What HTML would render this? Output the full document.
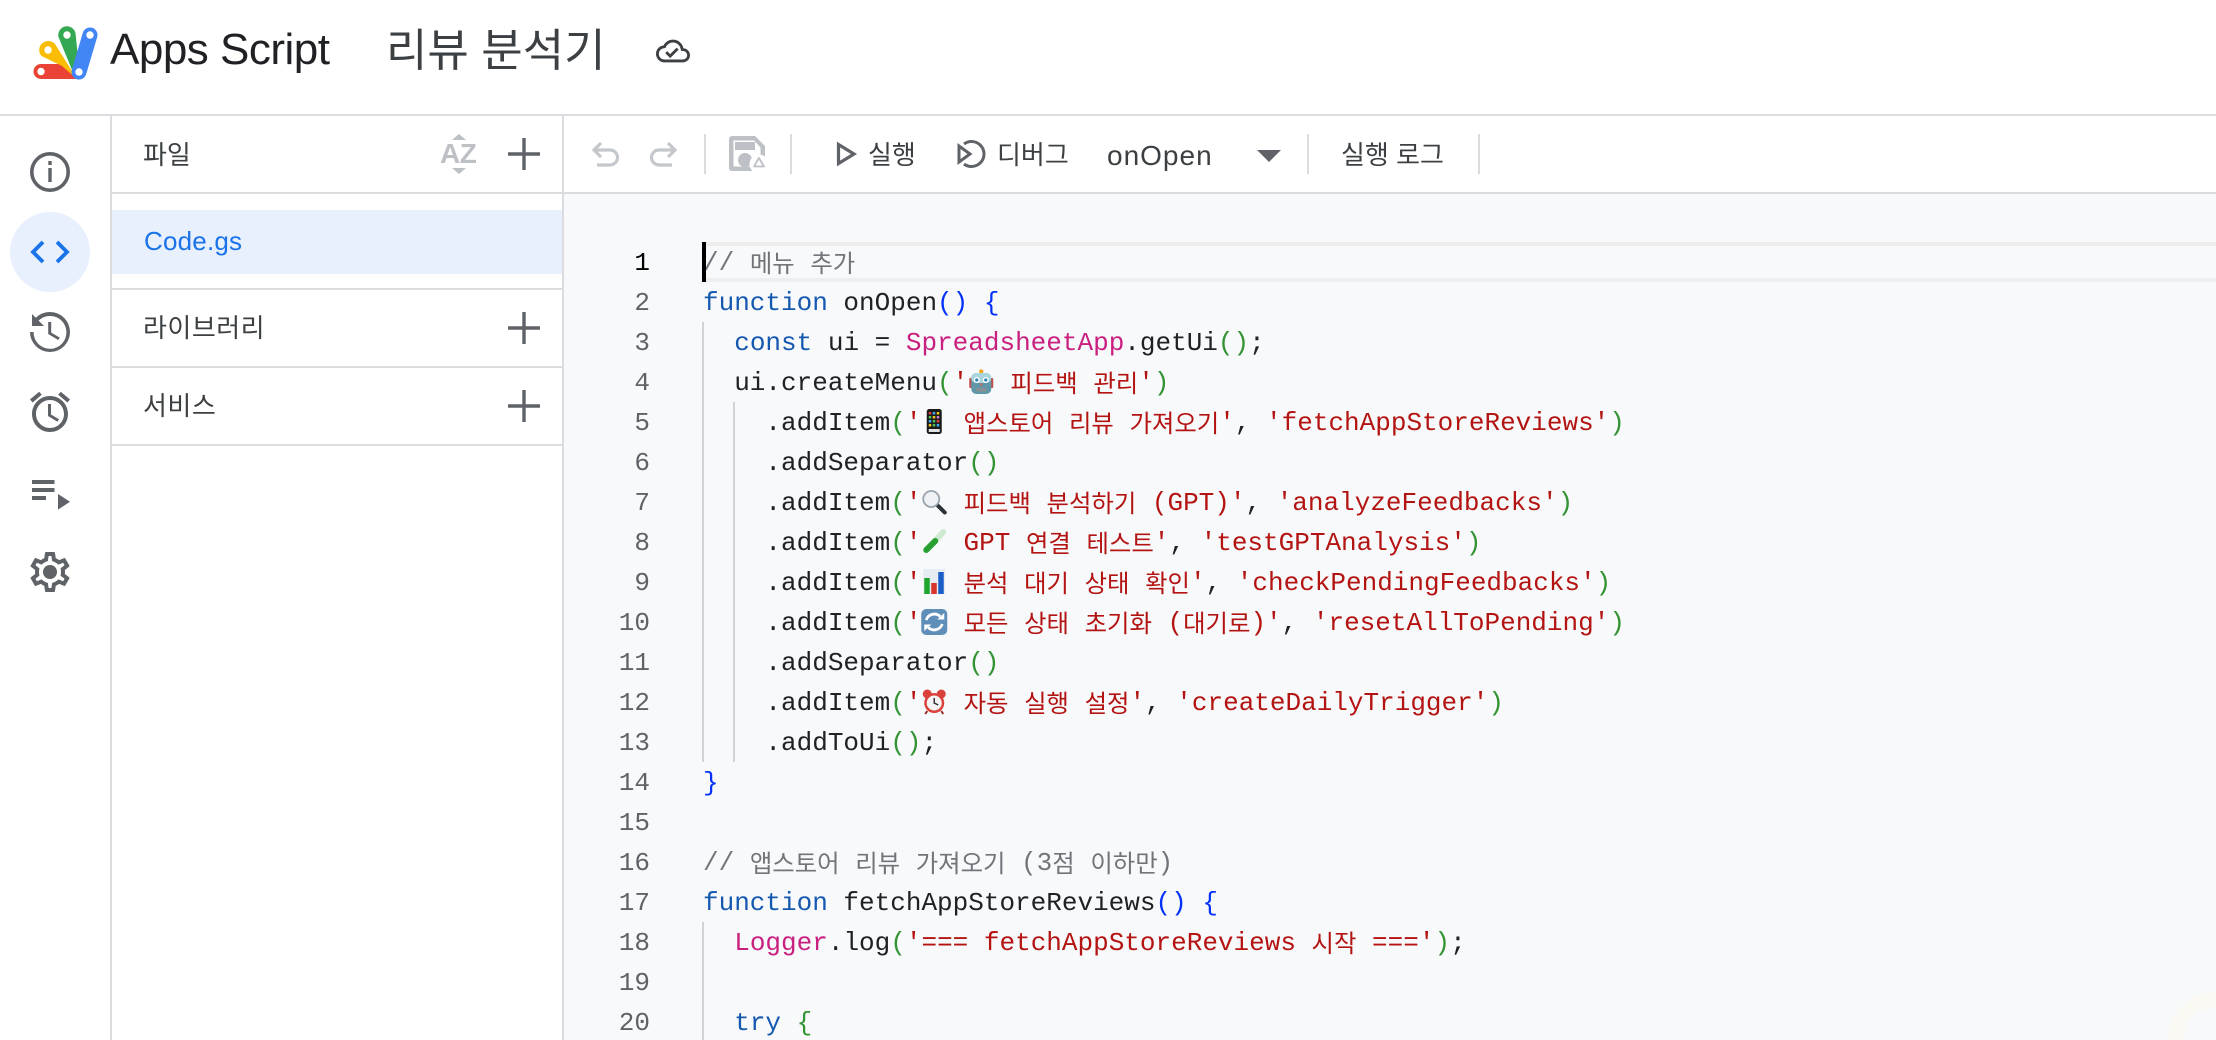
<!DOCTYPE html>
<html lang="ko"><head><meta charset="utf-8"><title>Apps Script</title>
<style>
html,body{margin:0;padding:0;width:2216px;height:1040px;overflow:hidden;background:#fff}
body{position:relative;font-family:"Liberation Sans","Noto Sans CJK KR",sans-serif;color:#3c4043}
.a{position:absolute}
.h{position:absolute;background:#dadce0;height:2px}
.v{position:absolute;background:#dadce0;width:2px}
.t{position:absolute;white-space:pre;font-size:26px;line-height:40px}
.l{position:absolute;left:703px;height:40px;line-height:40px;white-space:pre;font:26px/40px "Liberation Mono","Noto Sans CJK KR",monospace;color:#202124;margin-top:1px}
.l i{font-style:normal;font-size:24.4px;position:relative;top:2px}
.n{position:absolute;right:1566px;height:40px;font:26px/40px "Liberation Mono",monospace;color:#5f6368;margin-top:1px}
.k{color:#1558b0}.y{color:#c9207f}.s{color:#b31412}.c{color:#70757a}.b{color:#0431fa}.g{color:#319331}
.e{display:inline-block;width:26.5px;height:26px;vertical-align:-5px}
.e svg{display:block;width:26.5px;height:26px}
svg.i{position:absolute;width:48px;height:48px;left:26px;fill:#5f6368}
svg.p{position:absolute;width:40px;height:40px;left:504px;fill:none;stroke:#5f6368;stroke-width:3.4}
</style></head><body>

<!-- header -->
<svg class="a" style="left:24px;top:20px" width="90" height="66" viewBox="0 0 90 66" fill="none" stroke-linecap="round">
<path d="M17 44H40L53 59H17a7.500 7.500 0 0 1 0-15z" fill="#ea4335"/>
<path d="M17.500 36A9 9 0 0 1 31 24L53 59L38 46z" fill="#fbbc04"/>
<path d="M34.500 17A8.500 8.500 0 0 1 51.500 13L56 58L48 50z" fill="#34a853"/>
<path d="M66 15L55 52" stroke="#4285f4" stroke-width="15"/>
<g fill="#fff" stroke="none"><circle cx="17" cy="51.500" r="3.700"/><circle cx="24" cy="30" r="3.700"/><circle cx="43" cy="15" r="3.700"/><circle cx="66" cy="15" r="3.700"/><circle cx="55" cy="52" r="3.700"/></g>
</svg>
<div class="a" style="left:110px;top:24px;font-size:44px;line-height:52px;letter-spacing:-.5px;color:#202124;white-space:pre">Apps Script</div>
<div class="a" style="left:386px;top:18px;font-size:45px;line-height:66px;color:#3c4043;white-space:pre">리뷰 분석기</div>
<svg class="a" style="left:656px;top:34px;fill:#3c4043" width="34" height="34" viewBox="0 0 24 24"><path d="M19.35 10.04C18.67 6.59 15.64 4 12 4 9.11 4 6.6 5.64 5.35 8.04 2.34 8.36 0 10.91 0 14c0 3.31 2.69 6 6 6h13c2.76 0 5-2.24 5-5 0-2.64-2.05-4.78-4.65-4.96zM19 18H6c-2.21 0-4-1.79-4-4 0-2.05 1.53-3.76 3.56-3.97l1.07-.11.5-.95C8.08 7.14 9.94 6 12 6c2.62 0 4.88 1.86 5.39 4.43l.3 1.5 1.53.11c1.56.1 2.78 1.41 2.78 2.96 0 1.65-1.35 3-3 3zm-9-3.82l-2.09-2.09L6.5 13.5 10 17l6.01-6.01-1.41-1.41z"/></svg>

<!-- editor bg -->
<div class="a" style="left:564px;top:194px;width:1652px;height:846px;background:#f8f9fb"></div>

<!-- structure lines -->
<div class="h" style="left:0;top:114px;width:2216px;height:2px"></div>
<div class="v" style="left:110px;top:116px;height:924px"></div>
<div class="v" style="left:562px;top:116px;height:924px"></div>
<div class="h" style="left:112px;top:192px;width:2104px"></div>
<div class="h" style="left:112px;top:288px;width:450px"></div>
<div class="h" style="left:112px;top:366px;width:450px"></div>
<div class="h" style="left:112px;top:444px;width:450px"></div>

<!-- rail -->
<div class="a" style="left:10px;top:212px;width:80px;height:80px;border-radius:50%;background:#e8f0fe"></div>
<svg class="a" style="left:26px;top:148px" width="48" height="48" viewBox="26 148 48 48"><circle cx="50" cy="172" r="18.200" fill="none" stroke="#5f6368" stroke-width="3.600"/><rect x="48.300" y="161" width="3.400" height="4" fill="#5f6368"/><rect x="48.300" y="168" width="3.400" height="14" fill="#5f6368"/></svg>
<svg class="a" style="left:26px;top:228px" width="48" height="48" viewBox="26 228 48 48" fill="none" stroke="#1a73e8" stroke-width="3.800"><path d="M43 242L33 252L43 262M57 242L67 252L57 262"/></svg>
<svg class="i" style="top:308px" viewBox="0 0 24 24"><path d="M12 2A10 10 0 0 0 4.900 4.900L3 3v6h6L6.300 6.300A8.200 8.200 0 1 1 3.800 12H2a10 10 0 1 0 10-10z"/><path d="M11.100 7v6l5 3 .8-1.200-4.300-2.500V7z"/></svg>
<svg class="i" style="top:388px" viewBox="0 0 24 24"><path d="M22 5.720l-4.600-3.860-1.290 1.530 4.600 3.860L22 5.720zM7.880 3.390L6.600 1.860 2 5.710l1.290 1.530 4.590-3.850zM12.500 8H11v6l4.750 2.850.75-1.230-4-2.370V8zM12 4c-4.970 0-9 4.030-9 9s4.030 9 9 9 9-4.030 9-9-4.030-9-9-9zm0 16c-3.870 0-7-3.130-7-7s3.130-7 7-7 7 3.130 7 7-3.130 7-7 7z"/></svg>
<svg class="a" style="left:26px;top:470px;fill:#5f6368" width="48" height="48" viewBox="26 470 48 48"><path d="M32 480h22.500v4H32zM32 488h22.500v4H32zM32 496h14v4H32zM58 494l12 7.800-12 7.800z"/></svg>
<svg class="i" style="top:548px" viewBox="0 0 24 24"><path d="M19.430 12.980c.04-.32.07-.64.07-.98 0-.34-.03-.66-.07-.98l2.110-1.650c.19-.15.24-.42.12-.64l-2-3.460c-.09-.16-.26-.25-.44-.25-.06 0-.12.01-.17.03l-2.490 1c-.52-.4-1.080-.73-1.690-.98l-.38-2.650C14.460 2.180 14.250 2 14 2h-4c-.25 0-.46.18-.49.42l-.38 2.650c-.61.25-1.170.59-1.690.98l-2.490-1c-.06-.02-.12-.03-.18-.03-.17 0-.34.09-.43.25l-2 3.460c-.13.22-.07.49.12.64l2.110 1.650c-.04.32-.07.65-.07.98 0 .33.03.66.07.98l-2.110 1.650c-.19.15-.24.42-.12.64l2 3.460c.09.16.26.25.44.25.06 0 .12-.01.17-.03l2.490-1c.52.4 1.080.73 1.690.98l.38 2.650c.03.24.24.42.49.42h4c.25 0 .46-.18.49-.42l.38-2.650c.61-.25 1.170-.59 1.690-.98l2.490 1c.06.02.12.03.18.03.17 0 .34-.09.43-.25l2-3.460c.12-.22.07-.49-.12-.64l-2.110-1.650zm-1.980-1.710c.04.31.05.52.05.73 0 .21-.02.43-.05.73l-.14 1.130.89.7 1.080.84-.7 1.210-1.270-.51-1.040-.42-.9.68c-.43.32-.84.56-1.250.73l-1.060.43-.16 1.130-.2 1.350h-1.400l-.19-1.350-.16-1.130-1.060-.43c-.43-.18-.83-.41-1.230-.71l-.91-.7-1.060.43-1.270.51-.7-1.210 1.080-.84.89-.7-.14-1.130c-.03-.31-.05-.54-.05-.74s.02-.43.05-.73l.14-1.130-.89-.7-1.080-.84.7-1.210 1.270.51 1.040.42.9-.68c.43-.32.84-.56 1.250-.73l1.060-.43.16-1.130.2-1.350h1.390l.19 1.350.16 1.130 1.060.43c.43.18.83.41 1.230.71l.91.7 1.060-.43 1.270-.51.7 1.210-1.070.85-.89.7.14 1.130z"/><circle cx="12" cy="12" r="3.500"/></svg>

<!-- file panel -->
<div class="t" style="left:143px;top:135px">파일</div>
<div class="a" style="left:440px;top:136px;font:bold 28px/36px 'Liberation Sans',sans-serif;color:#bdc1c6;letter-spacing:-.5px">AZ</div>
<svg class="a" style="left:450px;top:134px;fill:#bdc1c6" width="20" height="40" viewBox="0 0 20 40"><path d="M2 6l7-6 7 6zM2 34h14l-7 6z"/></svg>
<svg class="p" style="top:134px" viewBox="0 0 40 40"><path d="M20 4v32M4 20h32"/></svg>
<div class="a" style="left:112px;top:210px;width:450px;height:64px;background:#e8f0fe"></div>
<div class="t" style="left:144px;top:221px;color:#1a73e8;letter-spacing:.2px">Code.gs</div>
<div class="t" style="left:143px;top:308px;letter-spacing:.5px">라이브러리</div>
<svg class="p" style="top:308px" viewBox="0 0 40 40"><path d="M20 4v32M4 20h32"/></svg>
<div class="t" style="left:143px;top:386px;letter-spacing:.5px">서비스</div>
<svg class="p" style="top:386px" viewBox="0 0 40 40"><path d="M20 4v32M4 20h32"/></svg>

<!-- toolbar -->
<svg class="a" style="left:564px;top:116px" width="940" height="76" viewBox="564 116 940 76" fill="none">
<g stroke="#c4c7cb" stroke-width="3.200">
<path d="M601 143L594 150L601 157M594 150H610a7.500 7.500 0 0 1 0 15H597"/>
<path d="M668 143L675 150L668 157M675 150H659a7.500 7.500 0 0 0 0 15H672"/>
</g>
<g fill="#dadce0"><rect x="704" y="134" width="2" height="40"/><rect x="790" y="134" width="2" height="40"/><rect x="1307" y="134" width="2" height="40"/><rect x="1478" y="134" width="2" height="40"/></g>
<path d="M729 139a3 3 0 0 1 3-3h23l10 10v22a3 3 0 0 1-3 3h-30a3 3 0 0 1-3-3z" fill="#bdc1c6"/>
<path d="M733.500 140.500h20.500l6.500 7v19h-27z" fill="#fff"/>
<rect x="735" y="142" width="20" height="8" fill="#bdc1c6"/>
<circle cx="745" cy="160" r="7" fill="#bdc1c6"/>
<circle cx="759" cy="164" r="9.500" fill="#fff"/>
<path d="M759 158l5 8.500h-10z" stroke="#bdc1c6" stroke-width="1.800" stroke-linejoin="round"/>
<path d="M838.500 144.500l15.500 9.500-15.500 9.500z" stroke="#5f6368" stroke-width="3.200"/>
<path d="M959 146l11 8-11 8z" stroke="#5f6368" stroke-width="3"/>
<path d="M964 144a12.500 12.500 0 1 1 0 20" stroke="#5f6368" stroke-width="3"/>
<path d="M1257 150h24l-12 12z" fill="#5f6368"/>
</svg>
<div class="t" style="left:868px;top:135px">실행</div>
<div class="t" style="left:997px;top:135px">디버그</div>
<div class="t" style="left:1107px;top:136px;font-size:28px;letter-spacing:1px">onOpen</div>
<div class="t" style="left:1341px;top:135px">실행 로그</div>

<!-- code -->
<div class="a" style="left:706px;top:242px;width:1510px;height:32px;border-top:4px solid #eeeeee;border-bottom:4px solid #eeeeee"></div>
<div class="a" style="left:702px;top:322px;width:2px;height:440px;background:#d3d3d3"></div>
<div class="a" style="left:733px;top:402px;width:2px;height:360px;background:#d3d3d3"></div>
<div class="a" style="left:702px;top:922px;width:2px;height:118px;background:#d3d3d3"></div>
<div class="a" style="left:2168px;top:992px;width:48px;height:48px;overflow:hidden"><div style="width:66px;height:66px;border:15px solid #faf9f4;border-radius:50%;box-sizing:content-box"></div></div>

<div class="n" style="top:242px;color:#000">1</div>
<div class="n" style="top:282px">2</div>
<div class="n" style="top:322px">3</div>
<div class="n" style="top:362px">4</div>
<div class="n" style="top:402px">5</div>
<div class="n" style="top:442px">6</div>
<div class="n" style="top:482px">7</div>
<div class="n" style="top:522px">8</div>
<div class="n" style="top:562px">9</div>
<div class="n" style="top:602px">10</div>
<div class="n" style="top:642px">11</div>
<div class="n" style="top:682px">12</div>
<div class="n" style="top:722px">13</div>
<div class="n" style="top:762px">14</div>
<div class="n" style="top:802px">15</div>
<div class="n" style="top:842px">16</div>
<div class="n" style="top:882px">17</div>
<div class="n" style="top:922px">18</div>
<div class="n" style="top:962px">19</div>
<div class="n" style="top:1002px">20</div>

<div class="l" style="top:242px"><span class="c">// <i>메뉴</i> <i>추가</i></span></div>
<div class="a" style="left:702px;top:242px;width:4px;height:40px;background:#000"></div>
<div class="l" style="top:282px"><span class="k">function</span> onOpen<span class="b">()</span> <span class="b">{</span></div>
<div class="l" style="top:322px">  <span class="k">const</span> ui = <span class="y">SpreadsheetApp</span>.getUi<span class="g">()</span>;</div>
<div class="l" style="top:362px">  ui.createMenu<span class="g">(</span><span class="s">'<span class="e"><svg viewBox="0 0 26 26"><circle cx="13" cy="2.500" r="2.200" fill="#f5a623"/><rect x="1" y="9" width="3" height="10" rx="1" fill="#c0504d"/><rect x="22" y="9" width="3" height="10" rx="1" fill="#c0504d"/><rect x="3" y="4" width="20" height="21" rx="5" fill="#5f97a8"/><rect x="3" y="4" width="20" height="10" rx="5" fill="#a9d5dd"/><circle cx="8.500" cy="11" r="3" fill="#fff"/><circle cx="17.500" cy="11" r="3" fill="#fff"/><circle cx="8.500" cy="11" r="1.600" fill="#2a7fb8"/><circle cx="17.500" cy="11" r="1.600" fill="#2a7fb8"/><path d="M11.500 14.500h3l-1.500 3z" fill="#e05a4e"/><rect x="8" y="19" width="10" height="3.500" rx="1" fill="#8a8f94"/></svg></span> <i>피드백</i> <i>관리</i>'</span><span class="g">)</span></div>
<div class="l" style="top:402px">    .addItem<span class="g">(</span><span class="s">'<span class="e"><svg viewBox="0 0 26 26"><rect x="5.500" y="0" width="15" height="25" rx="2.500" fill="#1a1a1a"/><g fill="#e8403a"><rect x="7.500" y="3" width="2.500" height="2.500"/><rect x="15.500" y="11" width="2.500" height="2.500"/></g><g fill="#3fa9f5"><rect x="11.500" y="3" width="2.500" height="2.500"/><rect x="7.500" y="11" width="2.500" height="2.500"/><rect x="15.500" y="15" width="2.500" height="2.500"/></g><g fill="#f5c518"><rect x="15.500" y="3" width="2.500" height="2.500"/><rect x="11.500" y="7" width="2.500" height="2.500"/><rect x="7.500" y="15" width="2.500" height="2.500"/></g><g fill="#4cc35b"><rect x="7.500" y="7" width="2.500" height="2.500"/><rect x="11.500" y="11" width="2.500" height="2.500"/><rect x="11.500" y="15" width="2.500" height="2.500"/></g><g fill="#c77dd6"><rect x="15.500" y="7" width="2.500" height="2.500"/></g><rect x="7.500" y="20" width="11" height="3" fill="#dfe3e6"/></svg></span> <i>앱스토어</i> <i>리뷰</i> <i>가져오기</i>'</span>, <span class="s">'fetchAppStoreReviews'</span><span class="g">)</span></div>
<div class="l" style="top:442px">    .addSeparator<span class="g">()</span></div>
<div class="l" style="top:482px">    .addItem<span class="g">(</span><span class="s">'<span class="e"><svg viewBox="0 0 26 26"><path d="M16 16l7.500 7.500" stroke="#2d3236" stroke-width="4" stroke-linecap="round"/><circle cx="10" cy="10" r="8" fill="#eef2f6" stroke="#9aa3ab" stroke-width="1.800"/></svg></span> <i>피드백</i> <i>분석하기</i> (GPT)'</span>, <span class="s">'analyzeFeedbacks'</span><span class="g">)</span></div>
<div class="l" style="top:522px">    .addItem<span class="g">(</span><span class="s">'<span class="e"><svg viewBox="0 0 26 26"><path d="M22 3L5 21" stroke="#cfe8d2" stroke-width="6" stroke-linecap="round"/><path d="M14 12L5 21" stroke="#27a032" stroke-width="6" stroke-linecap="round"/></svg></span> GPT <i>연결</i> <i>테스트</i>'</span>, <span class="s">'testGPTAnalysis'</span><span class="g">)</span></div>
<div class="l" style="top:562px">    .addItem<span class="g">(</span><span class="s">'<span class="e"><svg viewBox="0 0 26 26"><rect x="2" y="0" width="22" height="25" fill="#e6ecf2"/><rect x="3" y="9" width="5.500" height="16" fill="#20a52c"/><rect x="10" y="14" width="5.500" height="11" fill="#d9342b"/><rect x="17" y="3" width="5.500" height="22" fill="#1a5fc8"/></svg></span> <i>분석</i> <i>대기</i> <i>상태</i> <i>확인</i>'</span>, <span class="s">'checkPendingFeedbacks'</span><span class="g">)</span></div>
<div class="l" style="top:602px">    .addItem<span class="g">(</span><span class="s">'<span class="e"><svg viewBox="0 0 26 26"><rect x="0" y="0" width="26" height="26" rx="5" fill="#5f8fb8"/><path d="M5 11a8.500 8.500 0 0 1 14-3.500M21 15a8.500 8.500 0 0 1-14 3.500" fill="none" stroke="#fff" stroke-width="2.800"/><path d="M16 10.500h7V4zM10 15.500H3V22z" fill="#fff"/></svg></span> <i>모든</i> <i>상태</i> <i>초기화</i> (<i>대기로</i>)'</span>, <span class="s">'resetAllToPending'</span><span class="g">)</span></div>
<div class="l" style="top:642px">    .addSeparator<span class="g">()</span></div>
<div class="l" style="top:682px">    .addItem<span class="g">(</span><span class="s">'<span class="e"><svg viewBox="0 0 26 26"><circle cx="6" cy="5" r="4.500" fill="#d9413a"/><circle cx="20" cy="5" r="4.500" fill="#d9413a"/><path d="M6 22l-2 3M20 22l2 3" stroke="#9a2a25" stroke-width="2"/><circle cx="13" cy="14" r="10" fill="#d9413a"/><circle cx="13" cy="14" r="7.500" fill="#f4f4f4"/><path d="M13 9v5l4 2" fill="none" stroke="#333" stroke-width="1.500"/></svg></span> <i>자동</i> <i>실행</i> <i>설정</i>'</span>, <span class="s">'createDailyTrigger'</span><span class="g">)</span></div>
<div class="l" style="top:722px">    .addToUi<span class="g">()</span>;</div>
<div class="l" style="top:762px"><span class="b">}</span></div>
<div class="l" style="top:842px"><span class="c">// <i>앱스토어</i> <i>리뷰</i> <i>가져오기</i> (3<i>점</i> <i>이하만</i>)</span></div>
<div class="l" style="top:882px"><span class="k">function</span> fetchAppStoreReviews<span class="b">()</span> <span class="b">{</span></div>
<div class="l" style="top:922px">  <span class="y">Logger</span>.log<span class="g">(</span><span class="s">'=== fetchAppStoreReviews <i>시작</i> ==='</span><span class="g">)</span>;</div>
<div class="l" style="top:1002px">  <span class="k">try</span> <span class="g">{</span></div>
</body></html>
